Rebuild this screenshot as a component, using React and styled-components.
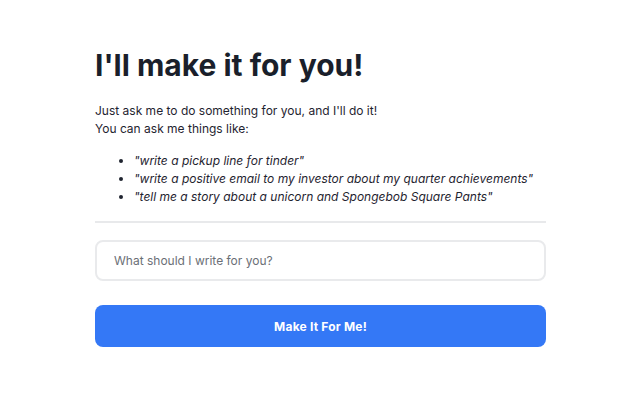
import React from 'react'
import styled, { createGlobalStyle } from 'styled-components'

const GlobalStyle = createGlobalStyle`
  body {
    margin: 0;
    background: #ffffff;
    font-family: Inter, 'Noto Sans', sans-serif;
    color: #1f2430;
  }
`

const Page = styled.div`
  width: 640px;
  height: 400px;
  box-sizing: border-box;
  padding: 43px 94px 0 95px;
`

const Heading = styled.h1`
  margin: 0;
  font-size: 30px;
  line-height: 44px;
  font-weight: 700;
  color: #1a1f2b;
`

const Intro = styled.p`
  margin: 15px 0 0;
  font-size: 12px;
  line-height: 18px;
  color: #1f2430;
`

const Examples = styled.ul`
  margin: 14px 0 0;
  padding-left: 39px;
  font-size: 12px;
  line-height: 18px;
  font-style: italic;
  color: #1f2430;
  white-space: nowrap;
`

const Divider = styled.hr`
  margin: 15px 0 0;
  border: none;
  border-top: 2px solid #e8e9eb;
`

const Field = styled.input`
  display: block;
  box-sizing: border-box;
  width: 100%;
  height: 41px;
  margin-top: 17px;
  padding: 0 17px;
  border: 2px solid #e9eaec;
  border-radius: 8px;
  font-family: inherit;
  font-size: 12px;
  color: #1f2430;
  outline: none;

  &::placeholder {
    color: #6b6f76;
  }
`

const SubmitButton = styled.button`
  display: block;
  width: 100%;
  height: 42px;
  margin-top: 24px;
  border: none;
  border-radius: 8px;
  background: #3478f6;
  color: #ffffff;
  font-family: inherit;
  font-size: 12px;
  letter-spacing: 0.2px;
  font-weight: 700;
  cursor: pointer;
`

const examples = [
  '"write a pickup line for tinder"',
  '"write a positive email to my investor about my quarter achievements"',
  '"tell me a story about a unicorn and Spongebob Square Pants"',
]

const App = () => (
  <>
    <GlobalStyle />
    <Page>
      <Heading>I'll make it for you!</Heading>
      <Intro>
        Just ask me to do something for you, and I'll do it!
        <br />
        You can ask me things like:
      </Intro>
      <Examples>
        {examples.map((text) => (
          <li key={text}>{text}</li>
        ))}
      </Examples>
      <Divider />
      <Field placeholder="What should I write for you?" />
      <SubmitButton>Make It For Me!</SubmitButton>
    </Page>
  </>
)

export default App
